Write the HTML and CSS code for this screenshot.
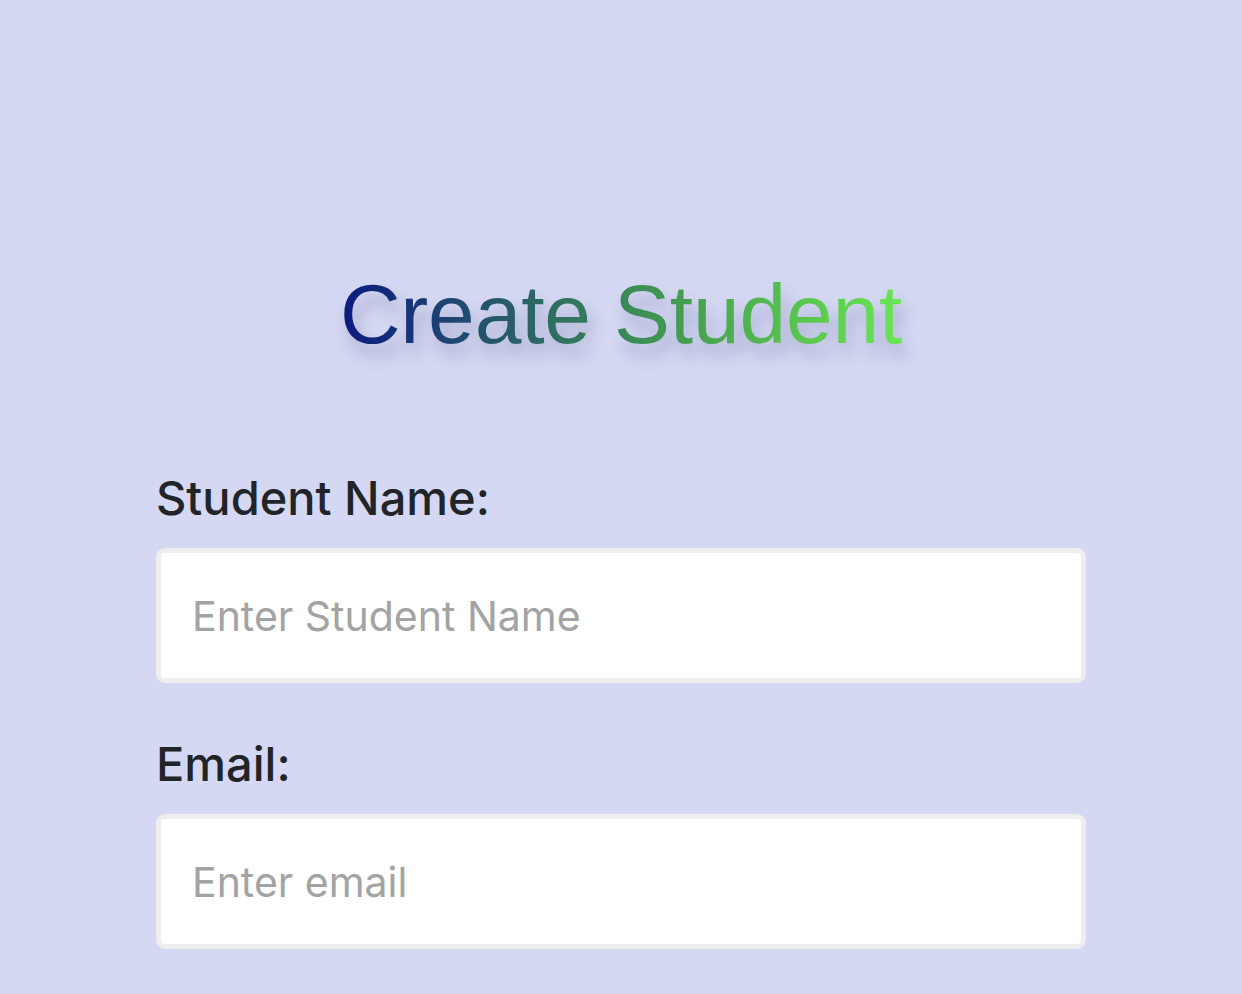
FILE: index.html
```html
<!DOCTYPE html>
<html>
<head>
<meta charset="utf-8">
<link rel="stylesheet" href="styles.css">
</head>
<body>
<div class="page">
  <h1 class="title">Create Student</h1>
  <form class="form">
    <div class="field">
      <label class="label" for="name">Student Name:</label>
      <input class="input" id="name" type="text" placeholder="Enter Student Name">
    </div>
    <div class="field">
      <label class="label" for="email">Email:</label>
      <input class="input" id="email" type="email" placeholder="Enter email">
    </div>
  </form>
</div>
</body>
</html>
```
FILE: styles.css
```css
html, body {
  margin: 0;
  padding: 0;
  background: #d5d8f2;
  height: 100%;
  overflow: hidden;
}
.page {
  padding: 0 156px;
  font-family: Inter, "Liberation Sans", sans-serif;
  display: flex;
  flex-direction: column;
}
.title {
  align-self: center;
  margin: 264px 0 0;
  white-space: nowrap;
  font-family: "Liberation Sans", Arial, sans-serif;
  font-weight: 400;
  font-size: 84px;
  line-height: 100px;
  letter-spacing: -0.2px;
  background: linear-gradient(90deg, #0c1a80 0%, #2f6e62 38%, #45a04e 62%, #6ae653 100%);
  background-clip: text;
  -webkit-background-clip: text;
  color: transparent;
  filter: drop-shadow(5px 12px 8px rgba(105, 110, 160, 0.45));
}
.form {
  margin-top: 105px;
  display: flex;
  flex-direction: column;
  gap: 52px;
}
.field {
  display: flex;
  flex-direction: column;
  gap: 21px;
}
.label {
  font-size: 47px;
  line-height: 58px;
  color: #212529;
  font-weight: 500;
}
.input {
  box-sizing: border-box;
  height: 135px;
  width: 100%;
  border: 5px solid #eeeeee;
  border-radius: 9px;
  background: #fff;
  padding: 0 31px;
  font-family: Inter, "Liberation Sans", sans-serif;
  font-size: 41px;
  outline: none;
}
.input::placeholder {
  color: #a3a3a3;
}
```
